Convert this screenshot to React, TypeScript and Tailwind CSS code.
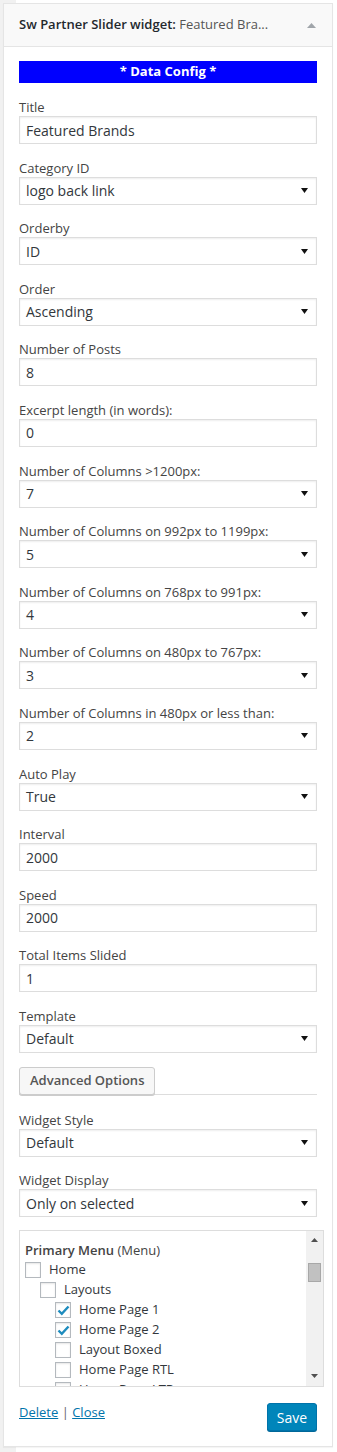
import React from 'react'

type Field = { label: string; value: string; select?: boolean }

const fields: Field[] = [
  { label: 'Title', value: 'Featured Brands' },
  { label: 'Category ID', value: 'logo back link', select: true },
  { label: 'Orderby', value: 'ID', select: true },
  { label: 'Order', value: 'Ascending', select: true },
  { label: 'Number of Posts', value: '8' },
  { label: 'Excerpt length (in words):', value: '0' },
  { label: 'Number of Columns >1200px:', value: '7', select: true },
  { label: 'Number of Columns on 992px to 1199px:', value: '5', select: true },
  { label: 'Number of Columns on 768px to 991px:', value: '4', select: true },
  { label: 'Number of Columns on 480px to 767px:', value: '3', select: true },
  { label: 'Number of Columns in 480px or less than:', value: '2', select: true },
  { label: 'Auto Play', value: 'True', select: true },
  { label: 'Interval', value: '2000' },
  { label: 'Speed', value: '2000' },
  { label: 'Total Items Slided', value: '1' },
  { label: 'Template', value: 'Default', select: true },
]

const menuItems = [
  { label: 'Home', depth: 0, checked: false },
  { label: 'Layouts', depth: 1, checked: false },
  { label: 'Home Page 1', depth: 2, checked: true },
  { label: 'Home Page 2', depth: 2, checked: true },
  { label: 'Layout Boxed', depth: 2, checked: false },
  { label: 'Home Page RTL', depth: 2, checked: false },
  { label: 'Home Page LTR', depth: 2, checked: false },
]

function Arrow() {
  return (
    <svg width="7" height="5" viewBox="0 0 7 5" className="shrink-0">
      <polygon points="0,0 7,0 3.5,5" fill="#111" />
    </svg>
  )
}

function Control({ value, select }: { value: string; select?: boolean }) {
  return (
    <div className="mt-px h-[28px] flex items-center justify-between border border-[#ddd] bg-white px-[6px] pr-[8px] text-[14px] text-[#32373c] shadow-[inset_0_1px_2px_rgba(0,0,0,0.07)]">
      <span>{value}</span>
      {select && <Arrow />}
    </div>
  )
}

function Label({ text }: { text: string }) {
  return <div className="h-[18px] leading-[20px] text-[13px] text-[#444]">{text}</div>
}

function FormField({ field }: { field: Field }) {
  return (
    <div className="mb-[13.6px]">
      <Label text={field.label} />
      <Control value={field.value} select={field.select} />
    </div>
  )
}

function Checkbox({ checked }: { checked: boolean }) {
  return (
    <span className="w-[16px] h-[16px] border border-[#b4b9be] bg-white shadow-[inset_0_1px_2px_rgba(0,0,0,0.1)] flex items-center justify-center shrink-0">
      {checked && (
        <svg width="13" height="11" viewBox="0 0 13 11">
          <path d="M1.5 5.5 L4.8 8.8 L11.5 1.5" fill="none" stroke="#1e8cbe" strokeWidth="2.4" />
        </svg>
      )}
    </span>
  )
}

export default function App() {
  return (
    <div className="min-h-[1452px] bg-[linear-gradient(to_right,#f1f1f1_16px,#fff_16px)] pt-[3px] pl-[3px] pr-[4px] pb-[4px] font-['Open_Sans',sans-serif]">
      <div className="w-[330px] border border-[#e5e5e5] bg-white shadow-[0_1px_1px_rgba(0,0,0,0.04)]">
        <div className="h-[43px] flex items-center justify-between px-[15px] pr-[16px] bg-[#f9f9f9] border-b border-[#e5e5e5] text-[13px]">
          <div className="whitespace-nowrap">
            <span className="font-semibold text-[#23282d]">Sw Partner Slider widget:</span>
            <span className="text-[#555]"> Featured Bra...</span>
          </div>
          <svg width="9" height="5" viewBox="0 0 9 5">
            <polygon points="0,5 9,5 4.5,0" fill="#a0a5aa" />
          </svg>
        </div>

        <div className="px-[15px] pt-[14px] pb-[15px]">
          <div className="h-[22px] bg-[#0000ff] text-white font-bold text-[13px] flex items-center justify-center mb-[14px]">
            * Data Config *
          </div>

          {fields.map((f) => (
            <FormField key={f.label} field={f} />
          ))}

          <div className="border-b border-[#ddd] h-[28px]">
            <button className="h-[28px] px-[10px] border border-[#ccc] rounded-[3px] bg-[#f7f7f7] shadow-[0_1px_0_#ccc] text-[13px] font-semibold text-[#555]">
              Advanced Options
            </button>
          </div>

          <div className="mt-[15px]">
            <FormField field={{ label: 'Widget Style', value: 'Default', select: true }} />
            <div>
              <Label text="Widget Display" />
              <Control value="Only on selected" select />
            </div>
          </div>

          <div className="mt-[13px] mr-[-7px] h-[157px] border border-[#ddd] flex overflow-hidden">
            <div className="flex-1 pl-[5px] pt-[9px] text-[13px] text-[#32373c] overflow-hidden">
              <div className="h-[20px] leading-[20px]">
                <span className="font-semibold text-[#444]">Primary Menu</span>
                <span className="text-[#444]"> (Menu)</span>
              </div>
              {menuItems.map((m) => (
                <div
                  key={m.label}
                  className={
                    'h-[20px] flex items-center gap-[8px] ' +
                    (m.depth === 0 ? '' : m.depth === 1 ? 'pl-[15px]' : 'pl-[30px]')
                  }
                >
                  <Checkbox checked={m.checked} />
                  <span>{m.label}</span>
                </div>
              ))}
            </div>
            <div className="w-[17px] bg-[#f1f1f1] flex flex-col items-center">
              <svg width="7" height="4" viewBox="0 0 7 4" className="mt-[7px]">
                <polygon points="0,4 7,4 3.5,0" fill="#505050" />
              </svg>
              <div className="mt-[21px] w-[13px] h-[19px] bg-[#c1c1c1] border border-[#a8a8a8]" />
              <div className="flex-1" />
              <svg width="7" height="4" viewBox="0 0 7 4" className="mb-[8px]">
                <polygon points="0,0 7,0 3.5,4" fill="#505050" />
              </svg>
            </div>
          </div>

          <div className="mt-[16px] flex items-start justify-between">
            <div className="text-[13px] leading-[17px] pt-[1px] text-[#444]">
              <a className="text-[#0073aa] underline">Delete</a>
              <span className="text-[#666]"> | </span>
              <a className="text-[#0073aa] underline">Close</a>
            </div>
            <button className="h-[28px] w-[50px] rounded-[3px] bg-[#0085ba] border border-[#0073aa] shadow-[0_1px_0_#006799] text-white text-[14px]">
              Save
            </button>
          </div>
        </div>
      </div>
    </div>
  )
}
